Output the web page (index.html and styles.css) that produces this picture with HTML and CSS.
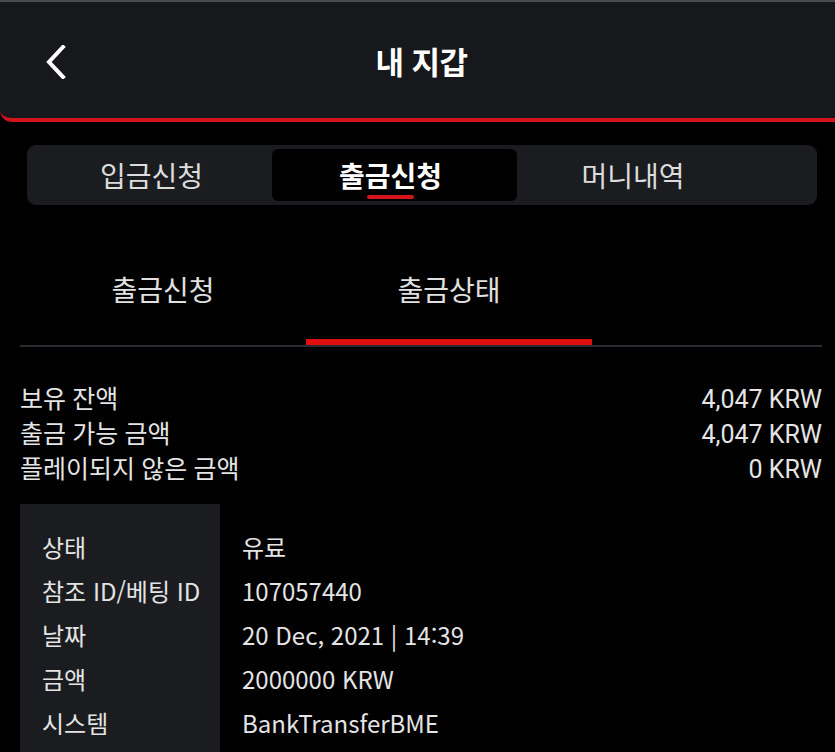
FILE: index.html
```html
<!DOCTYPE html>
<html lang="ko">
  <head>
    <meta charset="UTF-8" />
    <meta name="viewport" content="width=device-width, initial-scale=1.0" />
    <title>내 지갑</title>
    <link rel="stylesheet" href="styles.css">
  </head>
  <body>
    <header class="topbar">
      <a href="#" class="back" aria-label="뒤로">
        <svg width="22" height="34" viewBox="0 0 22 34">
          <path d="M18 2 L4 17 L18 32" fill="none" stroke="#fff" stroke-width="4" stroke-linecap="square" />
        </svg>
      </a>
      <h1 class="title">내 지갑</h1>
      <span></span>
    </header>

    <nav class="segment">
      <a href="#" class="segment-item">입금신청</a>
      <a href="#" class="segment-item active">출금신청</a>
      <a href="#" class="segment-item">머니내역</a>
    </nav>

    <div class="subtabs">
      <a href="#" class="subtab">출금신청</a>
      <a href="#" class="subtab active">출금상태</a>
    </div>

    <div class="balance">
      <div class="balance-row"><span>보유 잔액</span><span>4,047 KRW</span></div>
      <div class="balance-row"><span>출금 가능 금액</span><span>4,047 KRW</span></div>
      <div class="balance-row"><span>플레이되지 않은 금액</span><span>0 KRW</span></div>
    </div>

    <div class="detail">
      <div class="detail-label">상태</div>
      <div class="detail-value">유료</div>
      <div class="detail-label">참조 ID/베팅 ID</div>
      <div class="detail-value">107057440</div>
      <div class="detail-label">날짜</div>
      <div class="detail-value">20 Dec, 2021 | 14:39</div>
      <div class="detail-label">금액</div>
      <div class="detail-value">2000000 KRW</div>
      <div class="detail-label">시스템</div>
      <div class="detail-value">BankTransferBME</div>
    </div>
  </body>
</html>
```

FILE: styles.css
```css
body {
  margin: 0;
  background-color: #000;
  color: #e4e4e4;
  font-family: "Noto Sans CJK KR", "Noto Sans", sans-serif;
}

a {
  color: inherit;
  text-decoration: none;
}

/* header */
.topbar {
  display: grid;
  grid-template-columns: 1fr auto 1fr;
  align-items: center;
  height: 116px;
  background-color: #17181b;
  border-top: 2px solid #4a4b4e;
  border-bottom: 4px solid #d3141a;
  border-bottom-left-radius: 12px;
}

.back {
  display: flex;
  padding-left: 45px;
  padding-top: 4px;
}

.title {
  margin: 0;
  color: #fff;
  font-size: 31px;
  font-weight: 700;
  letter-spacing: -0.5px;
  padding-left: 8px;
}

/* segmented tabs */
.segment {
  display: grid;
  grid-template-columns: 241px 245px 232px;
  margin: 23px 18px 0 27px;
  padding: 4px;
  height: 52px;
  background-color: #1b1c20;
  border-radius: 9px;
}

.segment-item {
  display: flex;
  align-items: center;
  justify-content: center;
  font-size: 28px;
  color: #dcdcdc;
  border-radius: 6px;
  position: relative;
}

.segment-item.active {
  background-color: #000;
  color: #fff;
  font-weight: 700;
  padding-right: 8px;
}

.segment-item.active::after {
  content: "";
  position: absolute;
  left: 95px;
  bottom: 2px;
  width: 47px;
  height: 4px;
  border-radius: 2px;
  background-color: #d3141a;
}

/* sub tabs */
.subtabs {
  display: flex;
  margin: 0 13px 0 20px;
  border-bottom: 2px solid #2a2b30;
}

.subtab {
  width: 286px;
  padding: 64px 0 30px;
  line-height: 40px;
  font-size: 28px;
  text-align: center;
  color: #e0e0e0;
  border-bottom: 6px solid transparent;
}

.subtab.active {
  border-bottom-color: #e10e0e;
}

/* balance */
.balance {
  margin: 35px 13px 0 20px;
  font-family: Roboto, "Noto Sans CJK KR", sans-serif;
  font-size: 25px;
}

.balance-row {
  display: flex;
  justify-content: space-between;
  line-height: 35px;
}

/* detail table */
.detail {
  display: grid;
  grid-template-columns: 200px 1fr;
  margin: 17px 13px 0 20px;
  padding: 21px 0 20px;
  background: linear-gradient(to right, #1b1c20 200px, transparent 200px);
  font-size: 24px;
  line-height: 44px;
}

.detail-label {
  padding-left: 22px;
  white-space: nowrap;
}

.detail-value {
  padding-left: 22px;
}
```
